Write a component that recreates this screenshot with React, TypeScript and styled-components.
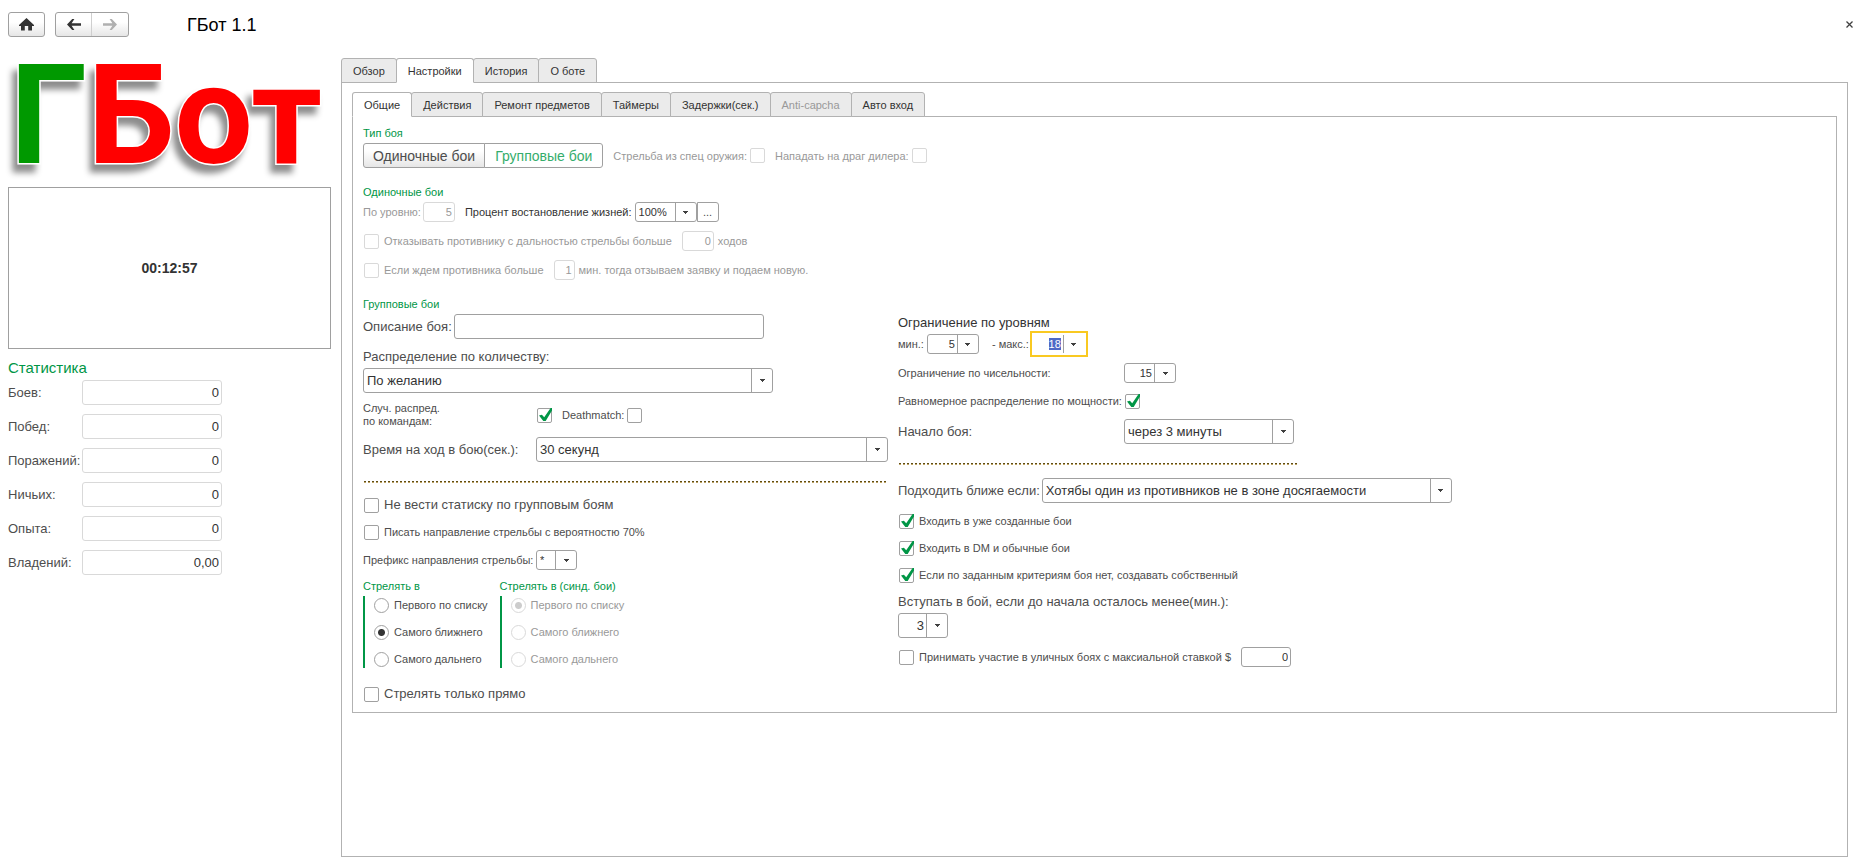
import React, { useEffect, useId, useRef, useState } from 'react';
import styled, { createGlobalStyle, css } from 'styled-components';

const color = {
  text: '#4d4d4d',
  dark: '#333333',
  muted: '#999999',
  green: '#009646',
  border: '#a0a0a0',
  borderMuted: '#d9d9d9',
  tabBorder: '#b2b2b2',
  tabIdle: '#ebebeb',
  focus: '#f9c921',
};

const GlobalStyle = createGlobalStyle`
  *, *::before, *::after { box-sizing: border-box; }
  body {
    margin: 0;
    background: #ffffff;
    color: ${color.text};
    font: 13px/18px "Liberation Sans", Arial, sans-serif;
  }
  button, input, select { font: inherit; color: inherit; margin: 0; }
`;

/* ---------- page frame ---------- */

const Page = styled.div`
  display: flex;
  flex-direction: column;
  min-height: 100vh;
`;

const Header = styled.header`
  display: flex;
  align-items: center;
  gap: 10px;
  padding: 12px 4px 0 8px;
`;

const ToolGroup = styled.div`
  display: flex;
  height: 25px;
  border: 1px solid ${color.border};
  border-radius: 3px;
  background: linear-gradient(#ffffff, #ffffff 40%, #e6e6e6);
  overflow: hidden;
`;

const ToolButton = styled.button`
  display: grid;
  place-items: center;
  width: 35px;
  padding: 0;
  border: 0;
  background: none;

  & + & {
    width: 37px;
    border-left: 1px solid #cfcfcf;
  }
`;

const Title = styled.h1`
  flex: 1;
  margin: 0;
  padding-left: 48px;
  color: #000000;
  font-size: 18px;
  font-weight: 400;
  line-height: 24px;
`;

const CloseButton = styled.button`
  display: grid;
  place-items: center;
  width: 16px;
  height: 16px;
  padding: 0;
  border: 0;
  background: none;
`;

const Body = styled.div`
  display: flex;
  flex: 1;
  gap: 10px;
  padding: 21px 13px 6px 8px;
`;

const Sidebar = styled.aside`
  flex: none;
  width: 323px;
`;

const Logo = styled.svg`
  display: block;
  width: 100%;
  height: 129px;
  overflow: visible;
  filter: drop-shadow(-5px 8px 3px rgba(0, 0, 0, 0.45));
`;

const LogoText = styled.text`
  font: bold 139px Roboto, sans-serif;
  stroke: #ffffff;
  stroke-width: 3px;
  paint-order: stroke;
`;

const TimerBox = styled.div`
  display: grid;
  place-items: center;
  height: 162px;
  border: 1px solid ${color.border};
  color: ${color.dark};
  font-size: 14px;
  font-weight: 700;
`;

const StatsTitle = styled.h2`
  margin: 9px 0 2px;
  color: ${color.green};
  font-size: 15px;
  font-weight: 400;
  line-height: 20px;
`;

const StatsList = styled.div`
  display: grid;
  grid-template-columns: 74px 140px;
  row-gap: 9px;
  align-items: center;
`;

/* ---------- tabs ---------- */

const Main = styled.main`
  display: flex;
  flex: 1;
  flex-direction: column;
  min-width: 0;
`;

const TabBar = styled.div`
  display: flex;
  margin-bottom: -1px;
`;

const Tab = styled.button`
  height: 25px;
  padding: 0 11px;
  border: 1px solid ${color.tabBorder};
  border-radius: 3px 3px 0 0;
  background: ${color.tabIdle};
  color: ${color.dark};
  font-size: 11px;
  line-height: 16px;

  & + & {
    margin-left: -1px;
  }

  &[aria-selected='true'] {
    border-bottom-color: #ffffff;
    background: #ffffff;
    position: relative;
  }

  &:disabled {
    color: ${color.muted};
  }
`;

const OuterPanel = styled.div`
  flex: 1;
  padding: 9px 10px;
  border: 1px solid ${color.tabBorder};
`;

const InnerPanel = styled.div`
  display: flex;
  flex-direction: column;
  gap: 16px;
  padding: 8px 10px 9px;
  border: 1px solid ${color.tabBorder};
`;

/* ---------- form layout ---------- */

const Section = styled.section`
  display: flex;
  flex-direction: column;
  gap: 2px;
`;

const Heading = styled.h3`
  margin: 0;
  color: ${color.green};
  font-size: 11px;
  font-weight: 400;
  line-height: 16px;
`;

const Stack = styled.div`
  display: flex;
  flex-direction: column;
  gap: 9px;
  min-width: 0;
`;

const Columns = styled.div`
  display: grid;
  grid-template-columns: 525px minmax(554px, 1fr);
  column-gap: 10px;
`;

const Row = styled.div<{ $small?: boolean; $height?: number; $gap?: number }>`
  display: flex;
  align-items: center;
  gap: ${(p) => p.$gap ?? 10}px;
  height: ${(p) => p.$height ?? 18}px;
  font-size: ${(p) => (p.$small ? 11 : 13)}px;
  white-space: nowrap;
`;

const Field = styled.div<{ $disabled?: boolean; $gap?: number }>`
  display: flex;
  align-items: center;
  gap: ${(p) => p.$gap ?? 2}px;
  color: ${(p) => (p.$disabled ? color.muted : 'inherit')};
`;

const Caption = styled.label<{ $width?: number; $dark?: boolean }>`
  flex: none;
  width: ${(p) => (p.$width ? `${p.$width}px` : 'auto')};
  color: ${(p) => (p.$dark ? color.dark : 'inherit')};
`;

const TwoLineCaption = styled(Caption)`
  font-size: 11px;
  line-height: 13px;
`;

const Labelled = styled.div`
  display: flex;
  flex-direction: column;
  gap: 2px;
`;

const LevelTitle = styled.div`
  color: ${color.dark};
`;

const Dots = styled.hr<{ $width?: number }>`
  width: ${(p) => (p.$width ? `${p.$width}px` : 'auto')};
  height: 2px;
  margin: 10px 1px 4px;
  border: 0;
  background:
    repeating-linear-gradient(90deg, #5f4c14 0 2px, transparent 2px 4px) 0 0 / 100% 1px no-repeat,
    repeating-linear-gradient(90deg, #bfa566 0 2px, transparent 2px 4px) 0 1px / 100% 1px no-repeat;
`;

/* ---------- controls ---------- */

const TextInput = styled.input<{ $width?: number; $soft?: boolean }>`
  flex: none;
  width: ${(p) => (p.$width ? `${p.$width}px` : '100%')};
  height: 100%;
  padding: 0 3px;
  border: 1px solid ${(p) => (p.$soft ? color.borderMuted : color.border)};
  border-radius: 3px;
  outline: 0;
  background: #ffffff;
  color: ${color.dark};

  &:disabled {
    border-color: ${color.borderMuted};
    color: ${color.muted};
  }
`;

const NumberInput = styled(TextInput)`
  height: ${(p) => (p.$soft ? '25px' : '20px')};
  padding: 0 2px;
  text-align: right;
`;

const ComboFrame = styled.div<{ $width: number; $focused?: boolean }>`
  display: grid;
  grid-template-columns: minmax(0, 1fr) 21px;
  flex: none;
  width: ${(p) => p.$width}px;
  height: 100%;
  border: 1px solid ${color.border};
  border-radius: 3px;
  color: ${color.dark};
  ${(p) =>
    p.$focused &&
    css`
      border-color: transparent;
      border-radius: 0;
      outline: 2px solid ${color.focus};
      outline-offset: 1px;
    `}
`;

const ComboSelect = styled.select`
  grid-area: 1 / 1 / 2 / 3;
  width: 100%;
  height: 100%;
  padding: 0 3px;
  border: 0;
  outline: 0;
  appearance: none;
  background: none;
`;

const ComboInput = styled.input`
  grid-area: 1 / 1 / 2 / 2;
  width: 100%;
  height: 100%;
  padding: 0 2px;
  border: 0;
  outline: 0;
  background: none;
  text-align: right;

  &::selection {
    background: #4f69c6;
    color: #ffffff;
  }
`;

const arrowCell = css`
  grid-area: 1 / 2 / 2 / 3;
  display: grid;
  place-items: center;
  padding: 0;
  border: 0;
  border-left: 1px solid ${color.border};
  background: none;
`;

const ArrowCell = styled.span`
  ${arrowCell}
  pointer-events: none;
`;

const ArrowButton = styled.button`
  ${arrowCell}
`;

const MoreButton = styled.button`
  width: 22px;
  height: 100%;
  margin-left: -3px;
  padding: 0;
  border: 1px solid ${color.border};
  border-radius: 0 3px 3px 0;
  background: #ffffff;
`;

const BoxWrap = styled.span`
  display: grid;
  flex: none;
  width: 15px;
  height: 15px;
  margin-left: 1px;

  & > * {
    grid-area: 1 / 1;
  }
`;

const Box = styled.input`
  width: 15px;
  height: 15px;
  border: 1px solid ${color.border};
  border-radius: 2px;
  appearance: none;
  background: #ffffff;

  &:disabled {
    border-color: ${color.borderMuted};
  }
`;

const Mark = styled.svg`
  width: 15px;
  height: 15px;
  pointer-events: none;
`;

const CheckLabel = styled.label<{ $disabled?: boolean }>`
  display: flex;
  align-items: center;
  gap: 5px;
  color: ${(p) => (p.$disabled ? color.muted : 'inherit')};
`;

const RadioSet = styled.fieldset<{ $disabled?: boolean }>`
  min-width: 0;
  margin: 0;
  padding: 0;
  border: 0;
  color: ${(p) => (p.$disabled ? color.muted : 'inherit')};
`;

const RadioLegend = styled.legend`
  margin-bottom: 3px;
  padding: 0;
  color: ${color.green};
  line-height: 14px;
`;

const RadioList = styled.div`
  display: flex;
  flex-direction: column;
  gap: 9px;
  padding-left: 9px;
  border-left: 2px solid ${color.green};
`;

const RadioLabel = styled.label`
  display: flex;
  align-items: center;
  gap: 5px;
  height: 18px;
`;

const Radio = styled.input`
  width: 15px;
  height: 15px;
  border: 1px solid ${color.border};
  border-radius: 50%;
  appearance: none;
  background: #ffffff;

  &:checked {
    background: radial-gradient(circle, #333333 3px, #ffffff 4px);
  }
  &:disabled {
    border-color: ${color.borderMuted};
  }
  &:disabled:checked {
    background: radial-gradient(circle, #cccccc 3px, #ffffff 4px);
  }
`;

const RadioGroups = styled.div`
  display: flex;
  gap: 12px;
  margin-bottom: 8px;
  font-size: 11px;
`;

const Segmented = styled.div`
  display: flex;
  height: 25px;
`;

const Segment = styled.button`
  padding: 0 9px;
  border: 1px solid ${color.border};
  background: linear-gradient(#ffffff, #ffffff 30%, #e6e6e6);
  color: ${color.text};
  font-size: 14px;
  line-height: 20px;

  &:first-child {
    border-radius: 3px 0 0 3px;
  }
  &:last-child {
    margin-left: -1px;
    padding: 0 10px;
    border-radius: 0 3px 3px 0;
  }
  &[aria-pressed='true'] {
    background: #ffffff;
    color: #35ad6c;
  }
`;

/* ---------- small components ---------- */

const DownArrow = () => (
  <svg width="5" height="3" viewBox="0 0 5 3" shapeRendering="crispEdges" aria-hidden="true">
    <path d="M0 0h5v1H0zM1 1h3v1H1zM2 2h1v1H2z" fill="#404040" />
  </svg>
);

function Check({ id, checked = false, disabled }: { id: string; checked?: boolean; disabled?: boolean }) {
  const [on, setOn] = useState(checked);
  return (
    <BoxWrap>
      <Box type="checkbox" id={id} checked={on} disabled={disabled} onChange={() => setOn(!on)} />
      {on && (
        <Mark viewBox="0 0 15 15" aria-hidden="true">
          <path d="M2 7.4 4.9 6.8 7.2 9.2 13.6 0H15v2.4L8.7 12.9H6.3z" fill={color.green} />
        </Mark>
      )}
    </BoxWrap>
  );
}

type CheckProps = { text: string; checked?: boolean; disabled?: boolean };

function CheckField({ text, checked, disabled }: CheckProps) {
  const id = useId();
  return (
    <CheckLabel htmlFor={id} $disabled={disabled}>
      <Check id={id} checked={checked} disabled={disabled} />
      {text}
    </CheckLabel>
  );
}

function TrailingCheck({ text, checked, disabled, width }: CheckProps & { width?: number }) {
  const id = useId();
  return (
    <Field $disabled={disabled} $gap={width ? 0 : 2}>
      <Caption htmlFor={id} $width={width}>
        {text}
      </Caption>
      <Check id={id} checked={checked} disabled={disabled} />
    </Field>
  );
}

type ComboProps = { id: string; value: string; width: number };

const Select = ({ id, value, width }: ComboProps) => (
  <ComboFrame $width={width}>
    <ComboSelect id={id} defaultValue={value}>
      <option>{value}</option>
    </ComboSelect>
    <ArrowCell>
      <DownArrow />
    </ArrowCell>
  </ComboFrame>
);

function NumberCombo({ id, value, width, active }: ComboProps & { active?: boolean }) {
  const ref = useRef<HTMLInputElement>(null);
  useEffect(() => {
    if (active) {
      ref.current?.focus();
      ref.current?.select();
    }
  }, [active]);
  return (
    <ComboFrame $width={width} $focused={active}>
      <ComboInput ref={ref} id={id} defaultValue={value} inputMode="numeric" />
      <ArrowButton type="button" aria-label="Выбрать">
        <DownArrow />
      </ArrowButton>
    </ComboFrame>
  );
}

const targets = ['Первого по списку', 'Самого ближнего', 'Самого дальнего'];

function TargetRadios({ title, selected, disabled }: { title: string; selected: number; disabled?: boolean }) {
  const name = useId();
  return (
    <RadioSet disabled={disabled} $disabled={disabled}>
      <RadioLegend>{title}</RadioLegend>
      <RadioList>
        {targets.map((text, i) => (
          <RadioLabel key={text}>
            <Radio type="radio" name={name} defaultChecked={i === selected} />
            {text}
          </RadioLabel>
        ))}
      </RadioList>
    </RadioSet>
  );
}

/* ---------- page parts ---------- */

const stats = [
  ['Боев:', '0'],
  ['Побед:', '0'],
  ['Поражений:', '0'],
  ['Ничьих:', '0'],
  ['Опыта:', '0'],
  ['Владений:', '0,00'],
];

const TopBar = () => (
  <Header>
    <ToolGroup>
      <ToolButton type="button" aria-label="Домой">
        <svg width="15" height="13" viewBox="0 0 15 13" aria-hidden="true">
          <path d="M7.5 0 15 7v1h-2v4.5H9.2V8H5.8v4.5H2V8H0V7z" fill="#333333" />
        </svg>
      </ToolButton>
    </ToolGroup>
    <ToolGroup>
      <ToolButton type="button" aria-label="Назад">
        <svg width="14" height="11" viewBox="0 0 14 11" aria-hidden="true">
          <path d="M0 5.5 5.2 0H7.4L4.6 4.3H14v2.4H4.6L7.4 11H5.2z" fill="#333333" />
        </svg>
      </ToolButton>
      <ToolButton type="button" aria-label="Вперед" disabled>
        <svg width="14" height="11" viewBox="0 0 14 11" aria-hidden="true">
          <path d="M14 5.5 8.8 0H6.6L9.4 4.3H0v2.4h9.4L6.6 11h2.2z" fill="#b0b0b0" />
        </svg>
      </ToolButton>
    </ToolGroup>
    <Title>ГБот 1.1</Title>
    <CloseButton type="button" aria-label="Закрыть">
      <svg width="7" height="7" viewBox="0 0 7 7" aria-hidden="true">
        <path d="M0.5 0.5l6 6M6.5 0.5l-6 6" stroke="#404040" strokeWidth="1.3" />
      </svg>
    </CloseButton>
  </Header>
);

const Statistics = () => (
  <Sidebar>
    <Logo viewBox="0 0 323 129" role="img" aria-label="ГБот">
      <LogoText x="2" y="105">
        <tspan fill="#009900">Г</tspan>
        <tspan fill="#ff0000">Бот</tspan>
      </LogoText>
    </Logo>
    <TimerBox>00:12:57</TimerBox>
    <StatsTitle>Статистика</StatsTitle>
    <StatsList>
      {stats.map(([name, value], i) => (
        <React.Fragment key={name}>
          <label htmlFor={`stat-${i}`}>{name}</label>
          <NumberInput id={`stat-${i}`} $soft readOnly value={value} />
        </React.Fragment>
      ))}
    </StatsList>
  </Sidebar>
);

function Tabs({ items, active, disabled }: { items: string[]; active: string; disabled?: string }) {
  const [current, setCurrent] = useState(active);
  return (
    <TabBar role="tablist">
      {items.map((item) => (
        <Tab
          key={item}
          type="button"
          role="tab"
          aria-selected={item === current}
          disabled={item === disabled}
          onClick={() => setCurrent(item)}
        >
          {item}
        </Tab>
      ))}
    </TabBar>
  );
}

const FightType = () => (
  <Section>
    <Heading>Тип боя</Heading>
    <Row $small $height={25}>
      <Segmented>
        <Segment type="button" aria-pressed="false">Одиночные бои</Segment>
        <Segment type="button" aria-pressed="true">Групповые бои</Segment>
      </Segmented>
      <TrailingCheck text="Стрельба из спец оружия:" disabled />
      <TrailingCheck text="Нападать на драг дилера:" disabled />
    </Row>
  </Section>
);

const SingleFights = () => (
  <Section>
    <Heading>Одиночные бои</Heading>
    <Stack>
      <Row $small $height={20}>
        <Field $disabled>
          <Caption htmlFor="level">По уровню:</Caption>
          <NumberInput id="level" $width={32} defaultValue="5" disabled />
        </Field>
        <Row $small $height={20} $gap={3}>
          <Caption htmlFor="life" $dark>Процент востановление жизней:</Caption>
          <Select id="life" value="100%" width={62} />
          <MoreButton type="button">...</MoreButton>
        </Row>
      </Row>
      <Row $small $height={20}>
        <CheckField text="Отказывать противнику с дальностью стрельбы больше" disabled />
        <Field $disabled $gap={4}>
          <NumberInput aria-label="ходов" $width={32} defaultValue="0" disabled />
          ходов
        </Field>
      </Row>
      <Row $small $height={20}>
        <CheckField text="Если ждем противника больше" disabled />
        <Field $disabled $gap={4}>
          <NumberInput aria-label="мин." $width={21} defaultValue="1" disabled />
          мин. тогда отзываем заявку и подаем новую.
        </Field>
      </Row>
    </Stack>
  </Section>
);

const GroupLeft = () => (
  <Stack>
    <Row $height={25} $gap={2}>
      <Caption htmlFor="about">Описание боя:</Caption>
      <TextInput id="about" $width={310} />
    </Row>
    <Labelled>
      <Caption htmlFor="spread">Распределение по количеству:</Caption>
      <Row $height={25}>
        <Select id="spread" value="По желанию" width={410} />
      </Row>
    </Labelled>
    <Row $small $height={26}>
      <Row $small $height={26} $gap={0}>
        <TwoLineCaption htmlFor="random" $width={173}>
          Случ. распред.
          <br />
          по командам:
        </TwoLineCaption>
        <Check id="random" checked />
      </Row>
      <TrailingCheck text="Deathmatch:" />
    </Row>
    <Row $height={25} $gap={0}>
      <Caption htmlFor="turn" $width={173}>Время на ход в бою(сек.):</Caption>
      <Select id="turn" value="30 секунд" width={352} />
    </Row>
    <Dots />
    <Row>
      <CheckField text="Не вести статиску по групповым боям" />
    </Row>
    <Row $small>
      <CheckField text="Писать направление стрельбы с вероятностю 70%" />
    </Row>
    <Row $small $height={20} $gap={0}>
      <Caption htmlFor="prefix" $width={173}>Префикс направления стрельбы:</Caption>
      <Select id="prefix" value="*" width={41} />
    </Row>
    <RadioGroups>
      <TargetRadios title="Стрелять в" selected={1} />
      <TargetRadios title="Стрелять в (синд. бои)" selected={0} disabled />
    </RadioGroups>
    <Row>
      <CheckField text="Стрелять только прямо" />
    </Row>
  </Stack>
);

const GroupRight = () => (
  <Stack>
    <Labelled>
      <LevelTitle>Ограничение по уровням</LevelTitle>
      <Row $small $height={20} $gap={13}>
        <Row $small $height={20} $gap={3}>
          <Caption htmlFor="min">мин.:</Caption>
          <NumberCombo id="min" value="5" width={52} />
        </Row>
        <Row $small $height={20} $gap={4}>
          <Caption htmlFor="max">- макс.:</Caption>
          <NumberCombo id="max" value="18" width={52} active />
        </Row>
      </Row>
    </Labelled>
    <Row $small $height={20} $gap={0}>
      <Caption htmlFor="count" $width={226}>Ограничение по чисельности:</Caption>
      <NumberCombo id="count" value="15" width={52} />
    </Row>
    <Row $small>
      <TrailingCheck text="Равномерное распределение по мощности:" width={226} checked />
    </Row>
    <Row $height={25} $gap={0}>
      <Caption htmlFor="start" $width={226}>Начало боя:</Caption>
      <Select id="start" value="через 3 минуты" width={170} />
    </Row>
    <Dots $width={398} />
    <Row $height={25} $gap={2}>
      <Caption htmlFor="closer">Подходить ближе если:</Caption>
      <Select id="closer" value="Хотябы один из противников не в зоне досягаемости" width={410} />
    </Row>
    <Row $small>
      <CheckField text="Входить в уже созданные бои" checked />
    </Row>
    <Row $small>
      <CheckField text="Входить в DM и обычные бои" checked />
    </Row>
    <Row $small>
      <CheckField text="Если по заданным критериям боя нет, создавать собственный" checked />
    </Row>
    <Labelled>
      <Caption htmlFor="join">Вступать в бой, если до начала осталось менее(мин.):</Caption>
      <Row $height={25}>
        <NumberCombo id="join" value="3" width={50} />
      </Row>
    </Labelled>
    <Row $small $height={20}>
      <CheckField text="Принимать участие в уличных боях с максиальной ставкой $" />
      <NumberInput aria-label="Максимальная ставка" $width={50} defaultValue="0" />
    </Row>
  </Stack>
);

export default function App() {
  return (
    <Page>
      <GlobalStyle />
      <TopBar />
      <Body>
        <Statistics />
        <Main>
          <Tabs items={['Обзор', 'Настройки', 'История', 'О боте']} active="Настройки" />
          <OuterPanel>
            <Tabs
              items={['Общие', 'Действия', 'Ремонт предметов', 'Таймеры', 'Задержки(сек.)', 'Anti-capcha', 'Авто вход']}
              active="Общие"
              disabled="Anti-capcha"
            />
            <InnerPanel>
              <FightType />
              <SingleFights />
              <Section>
                <Heading>Групповые бои</Heading>
                <Columns>
                  <GroupLeft />
                  <GroupRight />
                </Columns>
              </Section>
            </InnerPanel>
          </OuterPanel>
        </Main>
      </Body>
    </Page>
  );
}
